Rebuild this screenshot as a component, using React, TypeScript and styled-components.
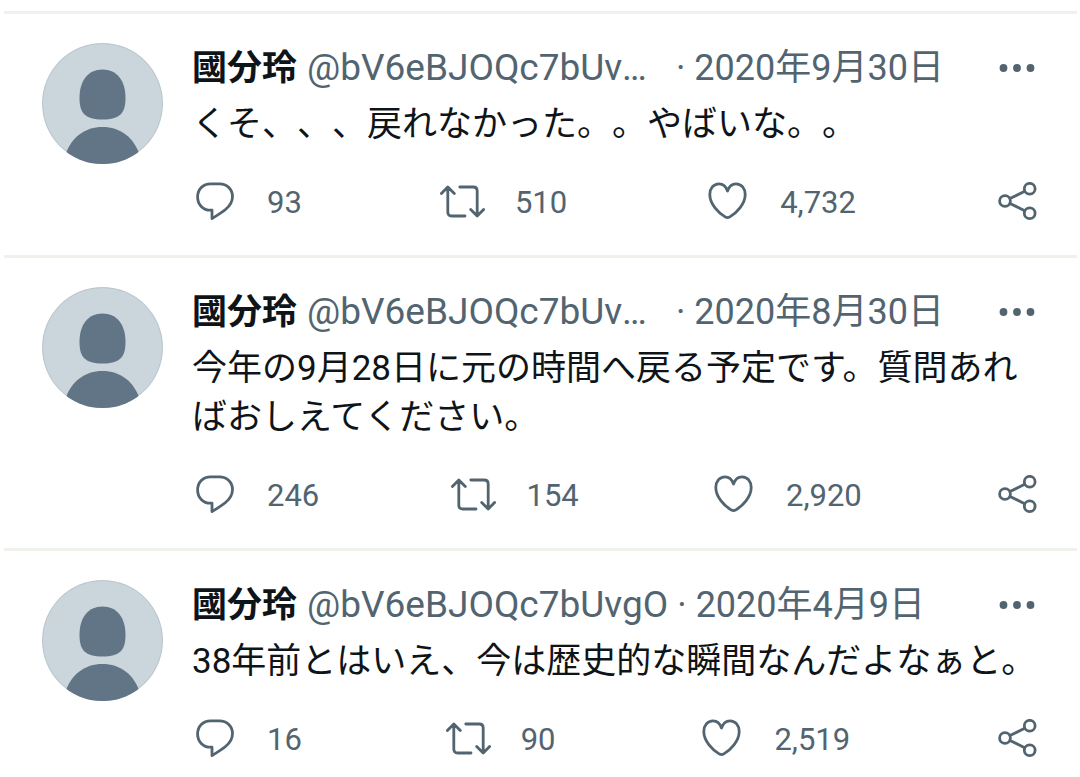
import React from "react";
import styled, { createGlobalStyle } from "styled-components";

const GlobalStyle = createGlobalStyle`
  * { box-sizing: border-box; }
  body {
    margin: 0;
    background: #fefffe;
    color: #0f1419;
    font-family: Roboto, "Noto Sans CJK JP", sans-serif;
    text-spacing-trim: space-all;
  }
`;

const Timeline = styled.main`
  padding: 11px 3px 0 4px;
`;

const Tweet = styled.article`
  display: flex;
  gap: 29px;
  padding: 29px 40px 35px 38px;
  border-top: 3px solid #edf3eb;

  &:last-child { padding-bottom: 0; }
`;

const AvatarLink = styled.a`
  flex: none;
  width: 121px;
  height: 121px;

  svg { display: block; }
`;

const Content = styled.div`
  flex: 1;
  min-width: 0;
`;

const Header = styled.header`
  display: flex;
  align-items: center;
  justify-content: space-between;
  gap: 54px;
  height: 50px;
`;

const Byline = styled.div`
  display: flex;
  align-items: baseline;
  min-width: 0;
  font-size: 36px;
  line-height: 49px;
  white-space: nowrap;
  color: #536471;
`;

const Name = styled.a`
  flex: none;
  margin-right: 10px;
  font-size: 35px;
  font-weight: 700;
  color: #0f1419;
  text-decoration: none;
`;

const Handle = styled.span`
  min-width: 0;
  overflow: hidden;
  text-overflow: ellipsis;
  font-size: 37px;
`;

const Separator = styled.span`
  flex: none;
  padding: 0 9px;
`;

const DateLink = styled.a`
  flex: none;
  color: inherit;
  text-decoration: none;
`;

const IconButton = styled.button`
  display: flex;
  flex: none;
  align-items: center;
  padding: 0;
  border: 0;
  background: none;
  color: #536471;
  cursor: pointer;
`;

const ActionButton = styled(IconButton)`
  gap: 33px;
  font-family: inherit;
  font-size: 31px;
  line-height: 38px;
`;

const RetweetButton = styled(ActionButton)`
  gap: 30px;
  padding-right: 3px;
`;

const ShareButton = styled(IconButton)`
  padding-left: 4px;
`;

const Count = styled.span`
  padding-top: 4px;
`;

const Body = styled.p`
  margin: 7px 0 0;
  font-size: 35px;
  line-height: 49px;
`;

const Actions = styled.div`
  display: flex;
  align-items: center;
  justify-content: space-between;
  height: 38px;
  margin-top: 33px;
  padding-left: 4px;
`;

const StrokeIcon = styled.svg`
  flex: none;
  fill: none;
  stroke: currentColor;
  stroke-width: 2.8;
  stroke-linecap: round;
  stroke-linejoin: round;
`;

const Avatar = () => (
  <svg width="121" height="121" viewBox="0 0 121 121" aria-hidden="true">
    <defs>
      <clipPath id="avatar-clip">
        <circle cx="60.5" cy="60.5" r="60.5" />
      </clipPath>
    </defs>
    <g clipPath="url(#avatar-clip)">
      <rect width="121" height="121" fill="#cbd6dc" />
      <circle cx="60.5" cy="60.5" r="60" fill="none" stroke="#bac6ce" />
      <path
        fill="#627586"
        d="M60.500 26.500C46 26.500 37.500 37.500 37.500 55C37.500 70 43 76.500 60.500 76.500C78 76.500 83.500 70 83.500 55C83.500 37.500 75 26.500 60.500 26.500Z"
      />
      <path fill="#627586" d="M23 113C29 94 43 84 60.500 84C78 84 92 94 98 113V121H23Z" />
    </g>
  </svg>
);

const ReplyIcon = () => (
  <StrokeIcon width="38" height="38" viewBox="0 0 38 38" aria-hidden="true">
    <path d="M14.500 1.800H23.500C31 1.800 36.500 7.500 36.500 14.500C36.500 19.800 34 23.800 29.500 27.500C26 30.400 20.500 33.800 16 36.600V28.200H14.500C7 28.200 1.600 22.500 1.600 15C1.600 7.500 7 1.800 14.500 1.800Z" />
  </StrokeIcon>
);

const RetweetIcon = () => (
  <StrokeIcon width="45" height="38" viewBox="0 0 45 38" aria-hidden="true">
    <path d="M1.400 11.500L7.800 5L14.300 11.500M7.800 5.500V30Q7.800 34 11.800 34H25M19.800 5H33.200Q37.200 5 37.200 9V33.500M30.700 27.500L37.200 34L43.600 27.500" />
  </StrokeIcon>
);

const LikeIcon = () => (
  <StrokeIcon width="39" height="38" viewBox="0 0 39 38" aria-hidden="true">
    <path d="M19.500 9C18 4.500 15 1.800 11 1.800C5.500 1.800 1.800 6.500 1.800 12.500C1.800 22 10.500 31 17.500 35.100Q19.500 36.200 21.500 35.100C28.500 31 37.200 22 37.200 12.500C37.200 6.500 33.500 1.800 28 1.800C24 1.800 21 4.500 19.500 9Z" />
  </StrokeIcon>
);

const ShareIcon = () => (
  <StrokeIcon width="39" height="38" viewBox="0 0 39 38" aria-hidden="true">
    <circle cx="7" cy="19" r="5.400" />
    <circle cx="31.700" cy="6.700" r="5.400" />
    <circle cx="31.700" cy="31.200" r="5.400" />
    <path d="M12 16.600L26.700 9.300M12 21.400L26.700 28.800" />
  </StrokeIcon>
);

const MoreIcon = () => (
  <svg width="39" height="12" viewBox="0 0 39 12" fill="currentColor" aria-hidden="true">
    <circle cx="5.500" cy="6" r="3.900" />
    <circle cx="19" cy="6" r="3.900" />
    <circle cx="32.500" cy="6" r="3.900" />
  </svg>
);

interface TweetData {
  date: string;
  text: string;
  replies: string;
  retweets: string;
  likes: string;
}

const tweets: TweetData[] = [
  {
    date: "2020年9月30日",
    text: "くそ、、、戻れなかった。。やばいな。。",
    replies: "93",
    retweets: "510",
    likes: "4,732",
  },
  {
    date: "2020年8月30日",
    text: "今年の9月28日に元の時間へ戻る予定です。質問あればおしえてください。",
    replies: "246",
    retweets: "154",
    likes: "2,920",
  },
  {
    date: "2020年4月9日",
    text: "38年前とはいえ、今は歴史的な瞬間なんだよなぁと。",
    replies: "16",
    retweets: "90",
    likes: "2,519",
  },
];

export default function App() {
  return (
    <>
      <GlobalStyle />
      <Timeline lang="ja">
        {tweets.map((tweet) => (
          <Tweet key={tweet.date}>
            <AvatarLink href="#profile" aria-label="國分玲">
              <Avatar />
            </AvatarLink>
            <Content>
              <Header>
                <Byline>
                  <Name href="#profile">國分玲</Name>
                  <Handle>@bV6eBJOQc7bUvgO</Handle>
                  <Separator>·</Separator>
                  <DateLink href="#status">{tweet.date}</DateLink>
                </Byline>
                <IconButton type="button" aria-label="もっと見る">
                  <MoreIcon />
                </IconButton>
              </Header>
              <Body>{tweet.text}</Body>
              <Actions>
                <ActionButton type="button" aria-label={`返信 ${tweet.replies}`}>
                  <ReplyIcon />
                  <Count>{tweet.replies}</Count>
                </ActionButton>
                <RetweetButton type="button" aria-label={`リツイート ${tweet.retweets}`}>
                  <RetweetIcon />
                  <Count>{tweet.retweets}</Count>
                </RetweetButton>
                <ActionButton type="button" aria-label={`いいね ${tweet.likes}`}>
                  <LikeIcon />
                  <Count>{tweet.likes}</Count>
                </ActionButton>
                <ShareButton type="button" aria-label="共有">
                  <ShareIcon />
                </ShareButton>
              </Actions>
            </Content>
          </Tweet>
        ))}
      </Timeline>
    </>
  );
}
